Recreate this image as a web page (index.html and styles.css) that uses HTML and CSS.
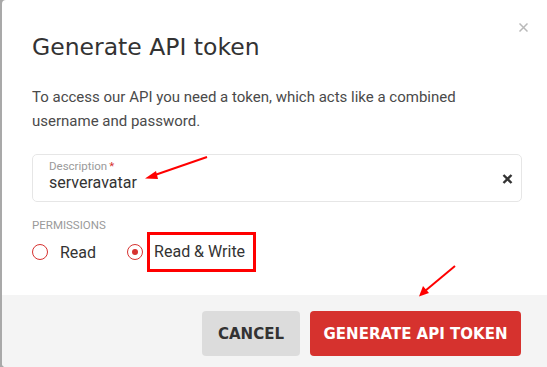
FILE: index.html
```html
<!DOCTYPE html>
<html>
<head>
<meta charset="utf-8">
<link rel="stylesheet" href="styles.css">
</head>
<body>
<div class="dialog">
  <button class="close" aria-label="Close">
    <svg width="9" height="9" viewBox="0 0 9 9"><path d="M0.5 0.5L8.5 8.5M8.5 0.5L0.5 8.5" stroke="#b9b9b9" stroke-width="1.5"/></svg>
  </button>
  <div class="content">
    <h1 class="title">Generate API token</h1>
    <p class="intro">To access our API you need a token, which acts like a combined username and password.</p>
    <div class="field">
      <div class="field-text">
        <span class="field-label">Description<span class="req">*</span></span>
        <span class="field-value">serveravatar</span>
      </div>
      <svg class="clear" width="11" height="10" viewBox="0 0 11 10"><path d="M1.5 1L9.5 9M9.5 1L1.5 9" stroke="#333" stroke-width="2.4"/></svg>
    </div>
    <div class="perm-label">PERMISSIONS</div>
    <div class="radios">
      <label class="radio"><span class="dot"></span><span>Read</span></label>
      <label class="radio checked"><span class="dot"></span><span class="boxed">Read &amp; Write</span></label>
    </div>
  </div>
  <div class="footer">
    <button class="btn btn-cancel">CANCEL</button>
    <button class="btn btn-primary">GENERATE API TOKEN</button>
  </div>
  <svg class="arrows" width="547" height="367" viewBox="0 0 547 367">
    <path d="M207 157L152 176" stroke="#ff0000" stroke-width="2"/>
    <path d="M145 178.5L156 171L158 179Z" fill="#ff0000"/>
    <path d="M455 266L425 291" stroke="#ff0000" stroke-width="2"/>
    <path d="M419 296.5L423 286L429 293Z" fill="#ff0000"/>
  </svg>
</div>
</body>
</html>
```
FILE: styles.css
```css
html, body {
  margin: 0;
  padding: 0;
}
body {
  width: 547px;
  height: 367px;
  overflow: hidden;
  background: #a9a9a9;
  font-family: Roboto, "Liberation Sans", sans-serif;
}
.dialog {
  position: relative;
  margin-left: 2px;
  width: 545px;
  height: 367px;
  background: #fff;
  border-radius: 4px 0 0 4px;
  display: flex;
  flex-direction: column;
  overflow: hidden;
}
.close {
  position: absolute;
  top: 23px;
  right: 19px;
  border: 0;
  padding: 0;
  background: none;
  width: 9px;
  height: 9px;
  display: flex;
}
.content {
  flex: 1;
  padding: 33px 25px 0 30px;
}
.title {
  margin: 0;
  font-family: "DejaVu Sans", sans-serif;
  font-weight: normal;
  font-size: 23.5px;
  line-height: 28px;
  color: #333;
}
.intro {
  margin: 24px 0 0;
  font-size: 15px;
  line-height: 24px;
  color: #4a4a4a;
}
.field {
  margin-top: 21px;
  height: 48px;
  box-sizing: border-box;
  border: 1px solid #e6e6e6;
  border-radius: 5px;
  display: flex;
  align-items: center;
  padding: 0 8px 0 16px;
}
.field-text {
  flex: 1;
  display: flex;
  flex-direction: column;
  padding-bottom: 5px;
}
.field-label {
  font-size: 11.5px;
  line-height: 14px;
  color: #9a9a9a;
}
.req {
  color: #d63230;
  margin-left: 2px;
}
.field-value {
  font-size: 16px;
  line-height: 20px;
  color: #333;
}
.clear {
  margin-top: 1px;
}
.perm-label {
  margin-top: 16px;
  font-size: 11.5px;
  line-height: 14px;
  color: #9a9a9a;
}
.radios {
  display: flex;
  gap: 31px;
  margin-top: 0;
}
.radio {
  display: flex;
  align-items: center;
  gap: 12px;
  font-size: 16px;
  color: #333;
}
.dot {
  width: 16px;
  height: 16px;
  box-sizing: border-box;
  border: 1.5px solid #d63230;
  border-radius: 50%;
  position: relative;
  flex: none;
}
.checked .dot::after {
  content: "";
  position: absolute;
  left: 3.5px;
  top: 3.5px;
  width: 6px;
  height: 6px;
  border-radius: 50%;
  background: #d63230;
}
.boxed {
  margin-left: -8px;
  padding: 7px 8px 7px 4px;
  border: 3.5px solid #ff0000;
  line-height: 20px;
}
.footer {
  height: 72px;
  box-sizing: border-box;
  background: #f4f4f4;
  display: flex;
  justify-content: flex-end;
  align-items: center;
  gap: 10px;
  padding: 5px 26px 0 0;
}
.btn {
  height: 45px;
  border: 0;
  border-radius: 4px;
  font-family: "DejaVu Sans", sans-serif;
  font-weight: bold;
  font-size: 15px;
  padding: 0;
}
.btn-cancel {
  width: 98px;
  background: #dcdcdc;
  color: #333;
}
.btn-primary {
  width: 211px;
  background: #d6322e;
  color: #fff;
}
.arrows {
  position: absolute;
  left: -2px;
  top: 0;
  pointer-events: none;
}
```
